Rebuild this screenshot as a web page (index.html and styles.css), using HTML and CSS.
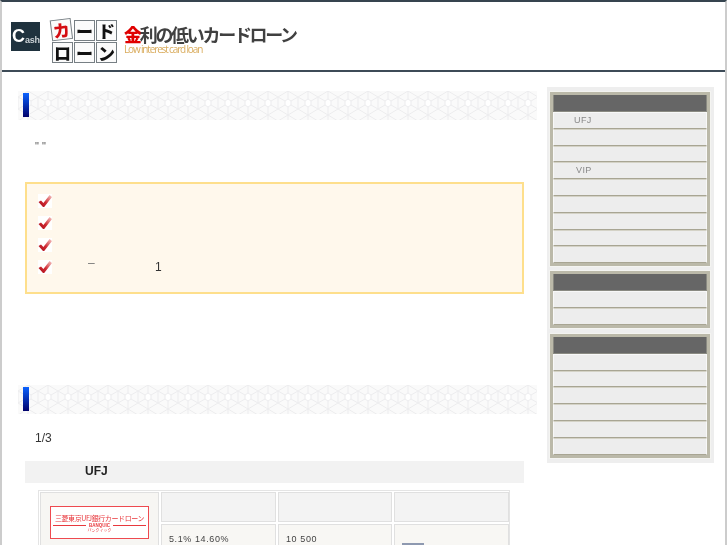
FILE: index.html
```html
<!DOCTYPE html>
<html lang="ja">
<head>
    <meta charset="UTF-8">
    <title>金利の低いカードローン</title>
    <link rel="stylesheet" href="styles.css">
</head>
<body>
    <svg class="defs" width="0" height="0">
        <defs>
            <linearGradient id="tick-grad" x1="0" y1="1" x2="1" y2="0">
                <stop offset="0" stop-color="#a90d18"/>
                <stop offset="0.45" stop-color="#cf2a33"/>
                <stop offset="1" stop-color="#f8cfcb"/>
            </linearGradient>
            <symbol id="tick" viewBox="0 0 14 14">
                <rect width="14" height="14" fill="#fff"/>
                <path d="M0.5 8 L3 6.6 L5.4 9 L11.6 1 L14 3 L6.2 13 L5 13 Z" fill="url(#tick-grad)"/>
            </symbol>
        </defs>
    </svg>
    <div class="page">
        <header class="site-header">
            <div class="cash-logo"><span class="cash-c">C</span><span class="cash-rest">ash</span></div>
            <div class="tiles">
                <span class="tile tile-red">カ</span>
                <span class="tile">ー</span>
                <span class="tile">ド</span>
                <span class="tile">ロ</span>
                <span class="tile">ー</span>
                <span class="tile">ン</span>
            </div>
            <div class="site-title">
                <div class="title-ja"><span class="title-red">金</span>利の低いカードローン</div>
                <div class="title-en">Low interest card loan</div>
            </div>
        </header>

        <div class="columns">
            <main class="main">
                <div class="band"><span class="band-mark"></span></div>
                <p class="quote">" "</p>

                <div class="note">
                    <div class="note-row"><svg class="tick"><use href="#tick"/></svg></div>
                    <div class="note-row"><svg class="tick"><use href="#tick"/></svg></div>
                    <div class="note-row"><svg class="tick"><use href="#tick"/></svg></div>
                    <div class="note-row">
                        <svg class="tick"><use href="#tick"/></svg>
                        <span class="dash">–</span>
                        <span class="one">1</span>
                    </div>
                </div>

                <div class="band band-second"><span class="band-mark"></span></div>
                <p class="ratio">1/3</p>
                <h3 class="bank-name">UFJ</h3>

                <div class="bank-table">
                    <div class="cell logo-cell">
                        <div class="bank-logo">
                            <div class="bank-logo-main">三菱東京UFJ銀行カードローン</div>
                            <div class="bank-logo-sub">BANQUIC</div>
                            <div class="bank-logo-kana">バンクイック</div>
                        </div>
                    </div>
                    <div class="cell head"></div>
                    <div class="cell head"></div>
                    <div class="cell head"></div>
                    <div class="cell value">5.1% 14.60%</div>
                    <div class="cell value">10 500</div>
                    <div class="cell value"><span class="detail-btn"></span></div>
                </div>
            </main>

            <aside class="sidebar">
                <div class="side-box">
                    <div class="side-head"></div>
                    <div class="side-row">UFJ</div>
                    <div class="side-row"></div>
                    <div class="side-row"></div>
                    <div class="side-row side-row-vip">VIP</div>
                    <div class="side-row"></div>
                    <div class="side-row"></div>
                    <div class="side-row"></div>
                    <div class="side-row"></div>
                    <div class="side-row"></div>
                </div>
                <div class="side-box">
                    <div class="side-head"></div>
                    <div class="side-row"></div>
                    <div class="side-row"></div>
                </div>
                <div class="side-box side-box-last">
                    <div class="side-head"></div>
                    <div class="side-row"></div>
                    <div class="side-row"></div>
                    <div class="side-row"></div>
                    <div class="side-row"></div>
                    <div class="side-row"></div>
                    <div class="side-row"></div>
                </div>
            </aside>
        </div>
    </div>
</body>
</html>
```

FILE: styles.css
```css
html, body {
    height: 545px;
    margin: 0;
    overflow: hidden;
}
body {
    background: #fff;
    font-family: "Liberation Sans", "Noto Sans CJK JP", sans-serif;
    color: #333;
}
.defs {
    display: block;
    height: 0;
}
.page {
    height: 545px;
    border-left: 2px solid #ccc;
    border-right: 2px solid #ccc;
    border-top: 2px solid #36444f;
    box-sizing: border-box;
    will-change: opacity;
}

/* header */
.site-header {
    display: flex;
    align-items: flex-start;
    height: 68px;
    border-bottom: 2px solid #3d4b57;
}
.cash-logo {
    display: flex;
    align-items: flex-end;
    width: 29px;
    height: 29px;
    margin: 20px 0 0 9px;
    padding-bottom: 7px;
    box-sizing: border-box;
    background: #1f323e;
    color: #fff;
    font-weight: bold;
    overflow: hidden;
}
.cash-c {
    font-size: 18px;
    line-height: 16px;
    margin-left: 1px;
}
.cash-rest {
    font-size: 9px;
    line-height: 8px;
    letter-spacing: -0.3px;
    color: #c9d0d4;
}
.tiles {
    display: grid;
    grid-template-columns: repeat(3, 21px);
    grid-auto-rows: 21px;
    gap: 1px;
    margin: 18px 0 0 12px;
}
.tile {
    display: flex;
    align-items: center;
    justify-content: center;
    box-sizing: border-box;
    border: 1.5px solid #777f84;
    background: #fbfbfb;
    color: #111;
    font-family: "Noto Sans CJK JP", sans-serif;
    font-size: 17px;
    font-weight: 900;
    line-height: 1;
}
.tile-red {
    color: #d40d12;
    border-width: 1px;
    transform: rotate(-7deg) translate(-1px, -1px);
}
.site-title {
    margin: 22px 0 0 7px;
}
.title-ja {
    font-family: "Noto Sans CJK JP", sans-serif;
    font-size: 18px;
    font-weight: 700;
    line-height: 20px;
    letter-spacing: -2.3px;
    color: #404040;
    white-space: nowrap;
}
.title-red {
    color: #e00000;
    font-weight: 900;
}
.title-en {
    font-family: "Open Sans", sans-serif;
    font-size: 10px;
    line-height: 11px;
    letter-spacing: -1.15px;
    color: #d9ab5c;
}

/* columns */
.columns {
    display: flex;
    align-items: flex-start;
}
.main {
    width: 519px;
    margin-left: 16px;
    padding-top: 19px;
}
.band {
    height: 29px;
    padding: 2px 0 3px 5px;
    box-sizing: border-box;
    background-color: #fafafa;
    background-image: url("data:image/svg+xml,%3Csvg xmlns='http://www.w3.org/2000/svg' width='20' height='24'%3E%3Cg stroke='%23ececee' fill='none'%3E%3Cpath d='M10 0L20 6V18L10 24L0 18V6Z'/%3E%3Cpath d='M10 0V8M0 6L7 10M20 6L13 10M10 24V16M0 18L7 14M20 18L13 14'/%3E%3Cpath d='M10 8L13 10V14L10 16L7 14V10Z' fill='%23fff'/%3E%3C/g%3E%3C/svg%3E");
}
.band-second {
    margin-top: 91px;
}
.band-mark {
    display: block;
    width: 6px;
    height: 24px;
    background: linear-gradient(#0a62ff, #00006b);
}
.quote {
    margin: 19px 0 0 17px;
    font-size: 11px;
    line-height: 14px;
    color: #555;
}
.note {
    height: 112px;
    margin: 29px 13px 0 7px;
    padding: 10px 0 0 11px;
    box-sizing: border-box;
    border: 2px solid #fedf8c;
    background: #fff8ec;
}
.note-row {
    display: flex;
    height: 22px;
    position: relative;
    font-size: 12px;
}
.tick {
    width: 14px;
    height: 14px;
}
.dash {
    position: absolute;
    left: 50px;
    top: -4px;
    color: #777;
}
.one {
    position: absolute;
    left: 117px;
    top: 0;
}
.ratio {
    margin: 17px 0 0 17px;
    font-size: 12px;
    line-height: 14px;
}
.bank-name {
    height: 22px;
    margin: 16px 13px 0 7px;
    padding-left: 60px;
    background: #f2f2f2;
    font-size: 12px;
    line-height: 20px;
    color: #222;
}
.bank-table {
    display: grid;
    grid-template-columns: 119px 115px 114px 115px;
    grid-template-rows: 30px 60px;
    gap: 2px;
    width: 472px;
    box-sizing: border-box;
    margin: 7px 0 0 20px;
    padding: 1px;
    border: 1px solid #e4e4e4;
    background: #fff;
}
.cell {
    border: 1px solid #e0e0e0;
    box-sizing: border-box;
    font-size: 9px;
    color: #444;
}
.logo-cell {
    grid-row: span 2;
    background: #f7f6f3;
    padding: 13px 9px 0;
}
.head {
    background: #f3f3f3;
}
.value {
    background: #f8f7f4;
    padding: 9px 7px;
    letter-spacing: 0.6px;
}
.bank-logo {
    height: 33px;
    box-sizing: border-box;
    border: 1.5px solid #ee4a50;
    background: #fff;
    color: #e8383d;
    text-align: center;
    overflow: hidden;
}
.bank-logo-main {
    margin-top: 6px;
    font-family: "Noto Sans CJK JP", sans-serif;
    font-size: 7px;
    line-height: 10px;
    white-space: nowrap;
    letter-spacing: -0.4px;
}
.bank-logo-sub {
    display: flex;
    align-items: center;
    gap: 3px;
    padding: 0 2px;
    font-size: 4.5px;
    line-height: 5px;
    font-weight: bold;
}
.bank-logo-sub::before,
.bank-logo-sub::after {
    content: "";
    flex: 1;
    border-top: 1px solid #e8383d;
}
.bank-logo-kana {
    font-family: "Noto Sans CJK JP", sans-serif;
    font-size: 4px;
    line-height: 5px;
}
.detail-btn {
    display: block;
    width: 22px;
    height: 12px;
    margin-top: 9px;
    background: #8e99b0;
}

/* sidebar */
.sidebar {
    width: 167px;
    margin: 15px 0 0 10px;
    padding: 5px 4px 5px 3px;
    box-sizing: border-box;
    background: #eee;
}
.side-box {
    margin-bottom: 5px;
    border: 3px solid #bbb9a9;
    box-shadow: 0 0 0 1px #f4f4f1;
    background: #f6f6f6;
}
.side-box-last {
    margin-top: 6px;
    margin-bottom: 0;
}
.side-head {
    height: 17px;
    background: #666;
    border: 1px solid #8a8a82;
    border-top: 0;
    box-sizing: border-box;
}
.side-row {
    height: 16.8px;
    box-sizing: border-box;
    padding-left: 20px;
    background: #ededed;
    border-top: 1px solid #f8f8f8;
    border-bottom: 1px solid #a8a593;
    border-left: 1px solid #f8f8f8;
    border-right: 1px solid #f8f8f8;
    font-size: 9px;
    line-height: 14px;
    letter-spacing: 0.4px;
    color: #888;
}
.side-row + .side-row {
    border-top-color: #d4d2c6;
}
.side-row-vip {
    padding-left: 22px;
}
```
